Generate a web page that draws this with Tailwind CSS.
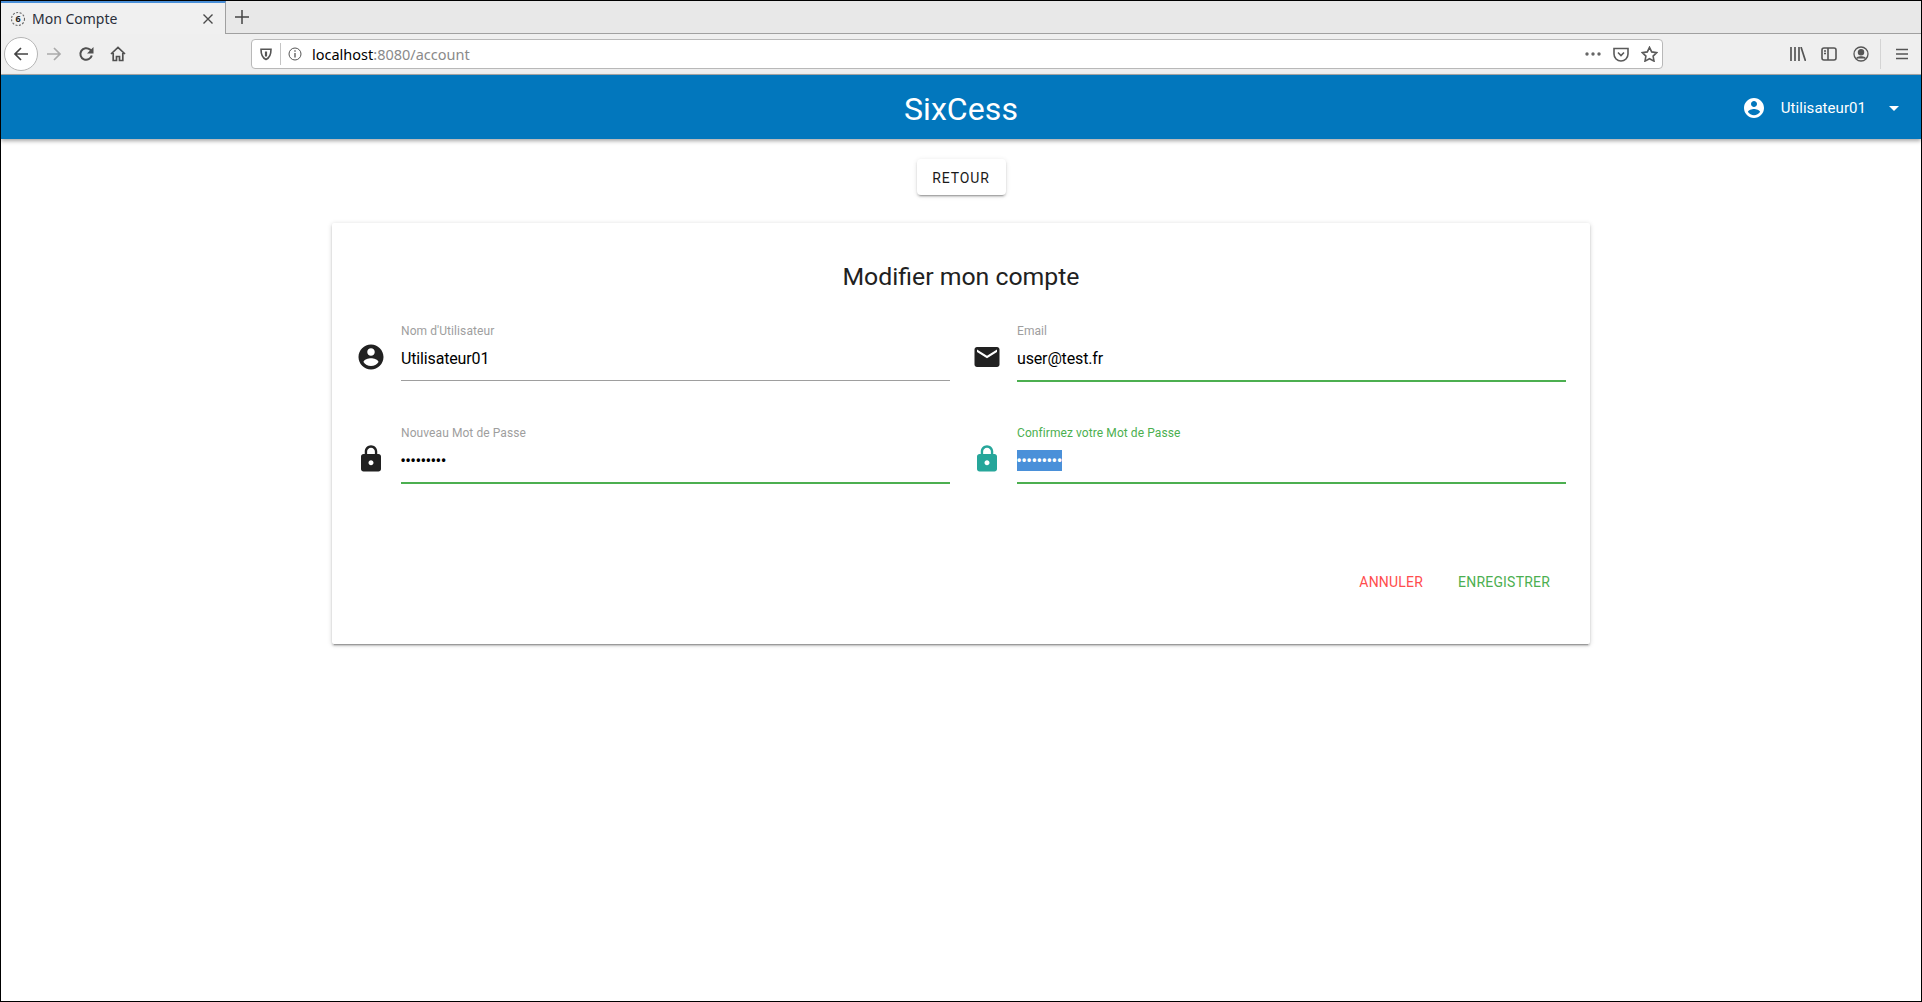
<!DOCTYPE html>
<html lang="fr">
<head>
  <meta charset="UTF-8">
  <title>Mon Compte</title>
  <script src="https://cdn.jsdelivr.net/npm/@tailwindcss/browser@4"></script>
</head>
<body class="bg-white font-['Roboto',sans-serif] overflow-hidden">
  <div class="w-[1922px] h-[1002px] flex flex-col border border-black overflow-hidden">
    <!-- tab strip -->
    <div class="h-[33px] bg-[#e8e8e8] flex items-stretch shrink-0 border-b border-[#a0a0a0] font-['Noto_Sans',sans-serif]">
      <div class="w-[225px] h-[33px] bg-[#f0f0f0] border-t-2 border-t-[#4a8fd8] border-r border-r-[#a0a0a0] flex items-center pl-[9px] pr-[11px] gap-[6px]">
        <svg class="w-[16px] h-[16px]" viewBox="0 0 16 16" fill="none"><circle cx="8" cy="8" r="6.5" stroke="#666" stroke-width="1.1" stroke-dasharray="2 1.5"/><text x="8" y="11" text-anchor="middle" font-size="9" font-weight="700" fill="#222">6</text></svg>
        <span class="text-[14px] text-[#2a2f3a] flex-1">Mon Compte</span>
        <svg class="w-[12px] h-[12px]" viewBox="0 0 12 12" stroke="#4a4a4a" stroke-width="1.4"><path d="M1.5 1.5l9 9M10.5 1.5l-9 9"/></svg>
      </div>
      <div class="w-[32px] flex items-center justify-center">
        <svg class="w-[14px] h-[14px]" viewBox="0 0 14 14" stroke="#444" stroke-width="1.5"><path d="M7 0v14M0 7h14"/></svg>
      </div>
    </div>
    <!-- toolbar -->
    <div class="h-[41px] bg-[#efefef] border-b border-[#a9a9a9] flex items-center shrink-0 relative">
      <div class="ml-[3px] w-[34px] h-[34px] rounded-full bg-white border border-[#b5b5b5] flex items-center justify-center">
        <svg class="w-[16px] h-[16px]" viewBox="0 0 16 16" fill="none" stroke="#444" stroke-width="1.7"><path d="M15 8H2M8 2L2 8l6 6"/></svg>
      </div>
      <svg class="ml-[8px] w-[16px] h-[16px]" viewBox="0 0 16 16" fill="none" stroke="#aaa" stroke-width="1.7"><path d="M1 8h13M8 2l6 6-6 6"/></svg>
      <svg class="ml-[16px] w-[16px] h-[16px]" viewBox="0 0 16 16" fill="none" stroke="#505050" stroke-width="2"><path d="M13.8 9.5A5.8 5.8 0 1 1 12 3.6L14 5.5"/><path d="M15.5 1v6.5H9" fill="#505050" stroke="none"/></svg>
      <svg class="ml-[16px] w-[16px] h-[16px]" viewBox="0 0 16 16" fill="none" stroke="#505050" stroke-width="1.7"><path d="M1 8l7-6.5L15 8M3.2 7v7.5h3.3v-4h3v4h3.3V7"/></svg>
      <!-- url bar -->
      <div class="ml-[125px] w-[1412px] h-[30px] bg-white border border-[#b8b8b8] rounded-[4px] flex items-center font-['Noto_Sans',sans-serif]">
        <svg class="ml-[7px] w-[14px] h-[14px]" viewBox="0 0 14 14" fill="none" stroke="#555" stroke-width="1.6"><path d="M2 2.2h10c0 5.5-1 8.6-5 10.3C3 10.8 2 7.7 2 2.2z"/><path d="M7 4.5v5" stroke-width="2.2"/></svg>
        <div class="ml-[7px] w-px h-[22px] bg-[#c4c4c4]"></div>
        <svg class="ml-[7px] w-[14px] h-[14px]" viewBox="0 0 14 14" fill="none" stroke="#555"><circle cx="7" cy="7" r="6"/><path d="M7 6v4.5M7 3.2v1.6" stroke-width="1.3"/></svg>
        <span class="ml-[10px] pt-[1px] text-[14.5px] text-black">localhost<span class="text-[#8a8a8a]">:8080/account</span></span>
        <div class="ml-auto flex items-center">
          <svg class="w-[16px] h-[4px]" viewBox="0 0 16 4" fill="#666"><circle cx="2" cy="2" r="1.7"/><circle cx="8" cy="2" r="1.7"/><circle cx="14" cy="2" r="1.7"/></svg>
          <svg class="ml-[12px] w-[16px] h-[15px]" viewBox="0 0 16 15" fill="none" stroke="#5a5a5a" stroke-width="1.6"><path d="M1 1.5h14V7a7 7 0 0 1-14 0z"/><path d="M5 5.5l3 3 3-3"/></svg>
          <svg class="ml-[12px] mr-[4px] w-[17px] h-[16px]" viewBox="0 0 17 16" fill="none" stroke="#5a5a5a" stroke-width="1.6"><path d="M8.5 1.3l2.2 4.6 5 .7-3.6 3.5.9 5-4.5-2.4L4 15.1l.9-5L1.3 6.6l5-.7z"/></svg>
        </div>
      </div>
      <svg class="ml-[127px] w-[16px] h-[14px]" viewBox="0 0 16 14" stroke="#555" stroke-width="1.7" fill="none"><path d="M1 0v14M5 0v14M9 0v14M11 0l4.5 14"/></svg>
      <svg class="ml-[15px] w-[16px] h-[14px]" viewBox="0 0 16 14" stroke="#555" stroke-width="1.6" fill="none"><rect x="1" y="1" width="14" height="12" rx="2"/><path d="M7 1v12M3 4h2M3 6.5h2"/></svg>
      <svg class="ml-[16px] w-[16px] h-[16px]" viewBox="0 0 16 16" fill="none" stroke="#555" stroke-width="1.3"><circle cx="8" cy="8" r="7"/><circle cx="8" cy="6.2" r="2.6" fill="#555"/><path d="M3.5 12.5c1-2.3 8-2.3 9 0" fill="#555"/></svg>
      <div class="ml-[11px] w-px h-[30px] bg-[#d4d4d4]"></div>
      <svg class="ml-[15px] w-[12px] h-[12px]" viewBox="0 0 12 12" stroke="#555" stroke-width="1.6"><path d="M0 1.5h12M0 6h12M0 10.5h12"/></svg>
    </div>
    <!-- app bar -->
    <header class="h-[64px] bg-[#0277bd] shadow-[0_2px_4px_rgba(0,0,0,0.35)] shrink-0 relative z-10 flex items-center justify-center text-white">
      <h1 class="text-[32px] tracking-[0.1px] leading-none pt-[4px]">SixCess</h1>
      <div class="absolute right-[22px] top-0 h-full flex items-center pt-[2px]">
        <svg class="w-[24px] h-[24px]" viewBox="0 0 24 24" fill="#fff"><path d="M12 2C6.48 2 2 6.48 2 12s4.48 10 10 10 10-4.48 10-10S17.52 2 12 2zm0 3c1.66 0 3 1.34 3 3s-1.34 3-3 3-3-1.34-3-3 1.34-3 3-3zm0 14.2c-2.5 0-4.71-1.28-6-3.22.03-1.99 4-3.08 6-3.08 1.99 0 5.97 1.09 6 3.08-1.29 1.94-3.5 3.22-6 3.22z"/></svg>
        <span class="ml-[15px] text-[15px] tracking-[0.05px]">Utilisateur01</span>
        <svg class="ml-[23px] w-[10px] h-[5px]" viewBox="0 0 10 5" fill="#fff"><path d="M0 0h10L5 5z"/></svg>
      </div>
    </header>
    <!-- page -->
    <main class="flex-1 flex flex-col items-center">
      <button class="mt-[20px] w-[89px] h-[36px] pt-[2px] bg-white rounded-[4px] text-[14px] font-normal tracking-[0.9px] text-[#1a1a1a] shadow-[0_3px_1px_-2px_rgba(0,0,0,0.2),0_2px_2px_0_rgba(0,0,0,0.14),0_1px_5px_0_rgba(0,0,0,0.12)]">RETOUR</button>
      <section class="mt-[28px] w-[1258px] h-[421px] bg-white rounded-[2px] shadow-[0_3px_1px_-2px_rgba(0,0,0,0.22),0_2px_2px_0_rgba(0,0,0,0.14),0_1px_5px_0_rgba(0,0,0,0.18)] flex flex-col">
        <h2 class="mt-[38px] text-center text-[24.8px] leading-[32px] text-[#212121]">Modifier mon compte</h2>
        <div class="mt-[31px] grid grid-cols-2 gap-x-[22px] gap-y-[44px] px-[24px]">
          <!-- username -->
          <div class="flex items-start gap-[15px]">
            <svg class="w-[30px] h-[30px] mt-[18px] shrink-0" viewBox="0 0 24 24" fill="#212121"><path d="M12 2C6.48 2 2 6.48 2 12s4.48 10 10 10 10-4.48 10-10S17.52 2 12 2zm0 3c1.66 0 3 1.34 3 3s-1.34 3-3 3-3-1.34-3-3 1.34-3 3-3zm0 14.2c-2.5 0-4.71-1.28-6-3.22.03-1.99 4-3.08 6-3.08 1.99 0 5.97 1.09 6 3.08-1.29 1.94-3.5 3.22-6 3.22z"/></svg>
            <div class="flex-1">
              <div class="text-[12px] leading-[14px] tracking-[0.08px] text-[#9e9e9e]">Nom d'Utilisateur</div>
              <div class="mt-[4px] h-[31px] pt-[1px] flex items-center text-[16px] tracking-[-0.15px] text-black border-b border-[#9e9e9e] box-content pb-[6px]">Utilisateur01</div>
            </div>
          </div>
          <!-- email -->
          <div class="flex items-start gap-[15px]">
            <svg class="w-[30px] h-[30px] mt-[18px] shrink-0" viewBox="0 0 24 24" fill="#212121"><path d="M20 4H4c-1.1 0-2 .9-2 2v12c0 1.1.9 2 2 2h16c1.1 0 2-.9 2-2V6c0-1.1-.9-2-2-2zm0 4l-8 5-8-5V6l8 5 8-5v2z"/></svg>
            <div class="flex-1">
              <div class="text-[12px] leading-[14px] tracking-[0.08px] text-[#9e9e9e]">Email</div>
              <div class="mt-[4px] h-[31px] pt-[1px] flex items-center text-[16px] tracking-[-0.15px] text-black border-b-2 border-[#4caf50] box-content pb-[6px]">user@test.fr</div>
            </div>
          </div>
          <!-- new password -->
          <div class="flex items-start gap-[15px]">
            <svg class="w-[30px] h-[30px] mt-[18px] shrink-0" viewBox="0 0 24 24" fill="#212121"><path d="M18 8h-1V6c0-2.76-2.24-5-5-5S7 3.24 7 6v2H6c-1.1 0-2 .9-2 2v10c0 1.1.9 2 2 2h12c1.1 0 2-.9 2-2V10c0-1.1-.9-2-2-2zm-6 9c-1.1 0-2-.9-2-2s.9-2 2-2 2 .9 2 2-.9 2-2 2zm3.1-9H8.9V6c0-1.71 1.39-3.1 3.1-3.1s3.1 1.39 3.1 3.1v2z"/></svg>
            <div class="flex-1">
              <div class="text-[12px] leading-[14px] tracking-[0.08px] text-[#9e9e9e]">Nouveau Mot de Passe</div>
              <div class="mt-[4px] h-[32px] flex items-center text-[16px] text-black border-b-2 border-[#4caf50] box-content pb-[6px]"><span class="font-['Liberation_Sans',sans-serif] text-[12px] tracking-[0.85px] font-bold">•••••••••</span></div>
            </div>
          </div>
          <!-- confirm password -->
          <div class="flex items-start gap-[15px]">
            <svg class="w-[30px] h-[30px] mt-[18px] shrink-0" viewBox="0 0 24 24" fill="#26a69a"><path d="M18 8h-1V6c0-2.76-2.24-5-5-5S7 3.24 7 6v2H6c-1.1 0-2 .9-2 2v10c0 1.1.9 2 2 2h12c1.1 0 2-.9 2-2V10c0-1.1-.9-2-2-2zm-6 9c-1.1 0-2-.9-2-2s.9-2 2-2 2 .9 2 2-.9 2-2 2zm3.1-9H8.9V6c0-1.71 1.39-3.1 3.1-3.1s3.1 1.39 3.1 3.1v2z"/></svg>
            <div class="flex-1">
              <div class="text-[12px] leading-[14px] tracking-[0.08px] text-[#4caf50]">Confirmez votre Mot de Passe</div>
              <div class="mt-[4px] h-[32px] flex items-center text-[16px] text-white border-b-2 border-[#4caf50] box-content pb-[6px]"><span class="bg-[#4a90d9] h-[21px] flex items-center font-['Liberation_Sans',sans-serif] text-[12px] tracking-[0.85px] font-bold">•••••••••</span></div>
            </div>
          </div>
        </div>
        <div class="mt-[88px] flex justify-end pr-[40px] gap-[35px] text-[14px] leading-[20px] tracking-[0.2px]">
          <span class="text-[#ff4d4d]">ANNULER</span>
          <span class="text-[#4caf50]">ENREGISTRER</span>
        </div>
      </section>
    </main>
  </div>
</body>
</html>
